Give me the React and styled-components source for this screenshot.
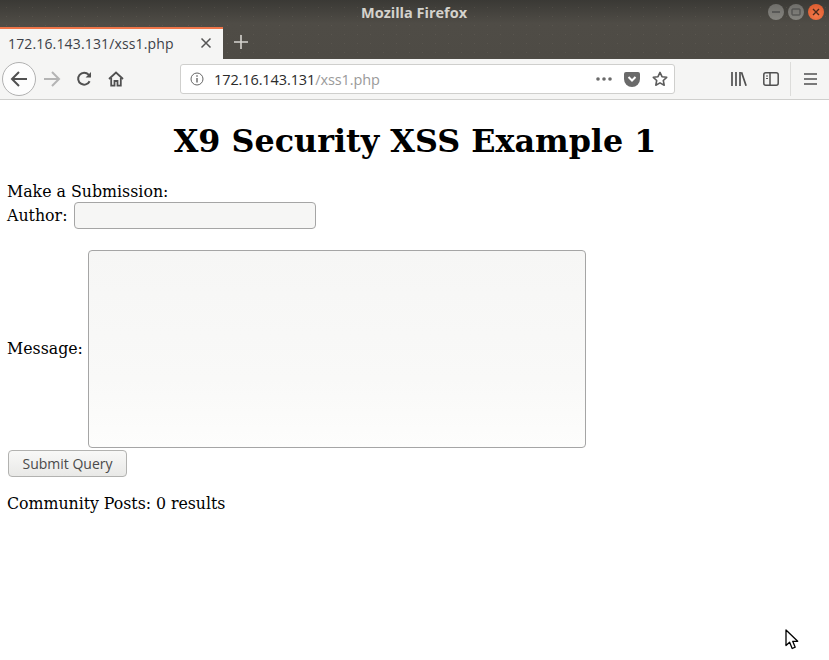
import React from "react";
import styled, { createGlobalStyle } from "styled-components";

const GlobalStyle = createGlobalStyle`
  html, body {
    margin: 0;
    padding: 0;
    height: 660px;
    overflow: hidden;
    background: #fff;
  }
`;

const App = () => {
  return (
    <Window>
      <GlobalStyle />
      <Header>
        <TitleBar>
          <TitleText>Mozilla Firefox</TitleText>
          <WindowControls>
            <WinButton>
              <svg width="10" height="10" viewBox="0 0 10 10">
                <path d="M1 5h8" stroke="#444" strokeWidth="1.2" />
              </svg>
            </WinButton>
            <WinButton>
              <svg width="10" height="10" viewBox="0 0 10 10">
                <rect x="1" y="2" width="8" height="6" rx="0.5" fill="none" stroke="#444" strokeWidth="1" />
              </svg>
            </WinButton>
            <WinButton $close>
              <svg width="10" height="10" viewBox="0 0 10 10">
                <path d="M2 2l6 6M8 2l-6 6" stroke="#4a2a1c" strokeWidth="1.4" />
              </svg>
            </WinButton>
          </WindowControls>
        </TitleBar>
        <TabBar>
          <Tab>
            <TabLabel>172.16.143.131/xss1.php</TabLabel>
            <svg width="12" height="12" viewBox="0 0 12 12">
              <path d="M1.5 1.5l9 9M10.5 1.5l-9 9" stroke="#555" strokeWidth="1.5" />
            </svg>
          </Tab>
          <NewTab>
            <svg width="14" height="14" viewBox="0 0 14 14">
              <path d="M7 0v14M0 7h14" stroke="#d6d4cf" strokeWidth="1.6" />
            </svg>
          </NewTab>
        </TabBar>
      </Header>

      <Toolbar>
        <BackButton>
          <svg width="18" height="18" viewBox="0 0 18 18" fill="none" stroke="#505050" strokeWidth="2">
            <path d="M17 9H2M9 2L2 9l7 7" />
          </svg>
        </BackButton>
        <NavIcon $left={7}>
          <svg width="18" height="18" viewBox="0 0 18 18" fill="none" stroke="#b4b4b4" strokeWidth="2">
            <path d="M1 9h15M9 2l7 7-7 7" />
          </svg>
        </NavIcon>
        <NavIcon $left={15}>
          <svg width="16" height="16" viewBox="0 0 16 16" fill="none" stroke="#505050" strokeWidth="2">
            <path d="M13.6 10.2A6 6 0 1 1 12.6 3.6L14.5 5.5" />
            <path d="M15 1v5.4H9.6z" fill="#505050" stroke="none" />
          </svg>
        </NavIcon>
        <NavIcon $left={16}>
          <svg width="16" height="16" viewBox="0 0 16 16" fill="none" stroke="#505050" strokeWidth="1.8">
            <path d="M1 8l7-6.5L15 8" />
            <path d="M3.2 7v7.6h3.3V10h3v4.6h3.3V7" />
          </svg>
        </NavIcon>
        <UrlBar>
          <svg width="14" height="14" viewBox="0 0 14 14" fill="none" stroke="#666">
            <circle cx="7" cy="7" r="6" />
            <path d="M7 6v4.4" strokeWidth="1.4" />
            <path d="M7 3.2v1.5" strokeWidth="1.4" />
          </svg>
          <UrlText>
            172.16.143.131<UrlPath>/xss1.php</UrlPath>
          </UrlText>
          <UrlActions>
            <svg width="16" height="4" viewBox="0 0 16 4" fill="#6a6a6a">
              <circle cx="2" cy="2" r="1.8" />
              <circle cx="8" cy="2" r="1.8" />
              <circle cx="14" cy="2" r="1.8" />
            </svg>
            <svg width="16" height="15" viewBox="0 0 16 15">
              <path d="M2 0h12a2 2 0 0 1 2 2v5a8 8 0 0 1-16 0V2a2 2 0 0 1 2-2z" fill="#6a6a6a" />
              <path d="M4.5 5L8 8.5 11.5 5" fill="none" stroke="#fff" strokeWidth="2" />
            </svg>
            <svg width="16" height="16" viewBox="0 0 16 16" fill="none" stroke="#5c5c5c" strokeWidth="1.6">
              <path d="M8 1.4l2 4.3 4.7.6-3.4 3.2.9 4.7L8 11.9l-4.2 2.3.9-4.7L1.3 6.3 6 5.7z" strokeLinejoin="round" />
            </svg>
          </UrlActions>
        </UrlBar>
        <ToolIcons>
          <svg width="16" height="14" viewBox="0 0 16 14" fill="none" stroke="#505050" strokeWidth="1.7">
            <path d="M1 0v14M5 0v14M9 0v14M10.5 0.2l4.6 13.6" />
          </svg>
          <SidebarIcon width="16" height="14" viewBox="0 0 16 14" fill="none" stroke="#505050" strokeWidth="1.5">
            <rect x="0.8" y="0.8" width="14.4" height="12.4" rx="2" />
            <path d="M7 1v12" />
            <path d="M3 4h2M3 6.5h2" strokeWidth="1.2" />
          </SidebarIcon>
          <Separator />
          <MenuIcon width="13" height="12" viewBox="0 0 13 12" stroke="#505050" strokeWidth="1.7">
            <path d="M0 1h13M0 6h13M0 11h13" />
          </MenuIcon>
        </ToolIcons>
      </Toolbar>

      <Page>
        <Heading>X9 Security XSS Example 1</Heading>
        <form onSubmit={(e) => e.preventDefault()}>
          <Line>Make a Submission:</Line>
          <FieldRow>
            Author: <AuthorInput type="text" />
          </FieldRow>
          <MessageRow>
            <MessageLabel>Message:</MessageLabel>
            <MessageInput />
          </MessageRow>
          <SubmitButton type="submit">Submit Query</SubmitButton>
        </form>
        <Results>Community Posts: 0 results</Results>
      </Page>

      <Cursor>
        <svg width="14" height="21" viewBox="0 0 14 21">
          <path
            d="M1 1v15.5l3.6-3.2 2.6 6.2 3-1.3-2.5-5.9h5z"
            fill="#fff"
            stroke="#000"
            strokeWidth="1.3"
            strokeLinejoin="round"
          />
        </svg>
      </Cursor>
    </Window>
  );
};

export default App;

const Window = styled.div`
  position: relative;
  width: 829px;
  height: 660px;
  overflow: hidden;
  background: #fff;
`;

const Header = styled.div`
  background: radial-gradient(circle, rgba(150, 140, 125, 0.16) 0.6px, transparent 1px) 0 12px / 13px 9px,
    linear-gradient(#3a3935, #4f4c46 40%, #4e4b45);
`;

const TitleBar = styled.div`
  position: relative;
  height: 27px;
  display: flex;
  align-items: center;
  justify-content: center;
`;

const TitleText = styled.span`
  margin: -3px 0 0 -1px;
  font: bold 14.5px "Open Sans", sans-serif;
  color: #d4d2cc;
`;

const WindowControls = styled.div`
  position: absolute;
  top: 4px;
  right: 5px;
  display: flex;
  gap: 4px;
`;

const WinButton = styled.div`
  width: 16px;
  height: 16px;
  border-radius: 50%;
  display: flex;
  align-items: center;
  justify-content: center;
  background: ${(props) =>
    props.$close
      ? "radial-gradient(circle at 50% 70%, #f4794a, #d9562a)"
      : "linear-gradient(#6f6e6a, #85847f)"};
`;

const TabBar = styled.div`
  height: 32px;
  display: flex;
`;

const Tab = styled.div`
  width: 223px;
  box-sizing: border-box;
  border-top: 2px solid #f0764a;
  background: #f5f5f4;
  padding: 0 11px 2px 8px;
  display: flex;
  align-items: center;
  justify-content: space-between;
`;

const TabLabel = styled.span`
  font: 14px "Open Sans", sans-serif;
  letter-spacing: 0.15px;
  color: #3c4148;
`;

const NewTab = styled.div`
  width: 35px;
  display: flex;
  align-items: center;
  justify-content: center;
  padding-bottom: 2px;
`;

const Toolbar = styled.div`
  height: 40px;
  box-sizing: content-box;
  border-bottom: 1px solid #cfcfcd;
  background: #f5f5f4;
  display: flex;
  align-items: center;
  padding-left: 2px;
`;

const BackButton = styled.div`
  width: 32px;
  height: 32px;
  border: 1px solid #b1b1b1;
  border-radius: 50%;
  background: #fdfdfd;
  display: flex;
  align-items: center;
  justify-content: center;
`;

const NavIcon = styled.div`
  margin-left: ${(props) => props.$left}px;
  display: flex;
  align-items: center;
  justify-content: center;
`;

const UrlBar = styled.div`
  width: 495px;
  height: 30px;
  margin-left: 56px;
  box-sizing: border-box;
  background: #fff;
  border: 1px solid #cfcfcd;
  border-radius: 3px;
  display: flex;
  align-items: center;
  padding: 0 6px 0 9px;
`;

const UrlText = styled.span`
  margin-left: 10px;
  font: 14.5px "Open Sans", sans-serif;
  letter-spacing: -0.1px;
  color: #2b2b2b;
`;

const UrlPath = styled.span`
  color: #9a9a9a;
`;

const UrlActions = styled.div`
  margin-left: auto;
  display: flex;
  align-items: center;
  gap: 12px;
`;

const ToolIcons = styled.div`
  margin-left: 56px;
  display: flex;
  align-items: center;
`;

const SidebarIcon = styled.svg`
  margin-left: 16px;
`;

const Separator = styled.div`
  width: 1px;
  height: 34px;
  margin-left: 11px;
  background: #dcdcda;
`;

const MenuIcon = styled.svg`
  margin-left: 13px;
`;

const Page = styled.div`
  padding: 0 8px 0 7px;
  font: 15.8px/24px "DejaVu Serif", serif;
  color: #000;
`;

const Heading = styled.h1`
  margin: 22px 0 21px;
  padding-left: 2px;
  text-align: center;
  font: bold 31.8px/37px "DejaVu Serif", serif;
`;

const Line = styled.div`
  height: 24px;
`;

const FieldRow = styled.div`
  height: 24px;
  display: flex;
  align-items: center;
  gap: 6px;
`;

const AuthorInput = styled.input`
  width: 242px;
  height: 27px;
  box-sizing: border-box;
  margin-top: -2px;
  border: 1px solid #a5a5a5;
  border-radius: 4px;
  background: #f6f6f5;
  outline: none;
`;

const MessageRow = styled.div`
  margin-top: 22px;
  display: flex;
  align-items: center;
  gap: 5px;
`;

const MessageLabel = styled.span`
  line-height: 24px;
`;

const MessageInput = styled.textarea`
  width: 498px;
  height: 198px;
  box-sizing: border-box;
  margin: 0;
  border: 1px solid #a5a5a5;
  border-radius: 4px;
  background: linear-gradient(#f6f6f5, #f9f9f8 65%, #fdfdfc);
  outline: none;
  resize: none;
`;

const SubmitButton = styled.button`
  display: block;
  width: 119px;
  height: 27px;
  margin: 2px 0 0 1px;
  padding: 0;
  border: 1px solid #b2b2b0;
  border-radius: 4px;
  background: linear-gradient(#f8f8f7, #e9e9e7);
  font: 14px "Open Sans", sans-serif;
  color: #4a4a4a;
`;

const Results = styled.p`
  margin: 15px 0 0;
  letter-spacing: -0.04px;
`;

const Cursor = styled.div`
  position: absolute;
  left: 785px;
  top: 629px;
  line-height: 0;
`;
